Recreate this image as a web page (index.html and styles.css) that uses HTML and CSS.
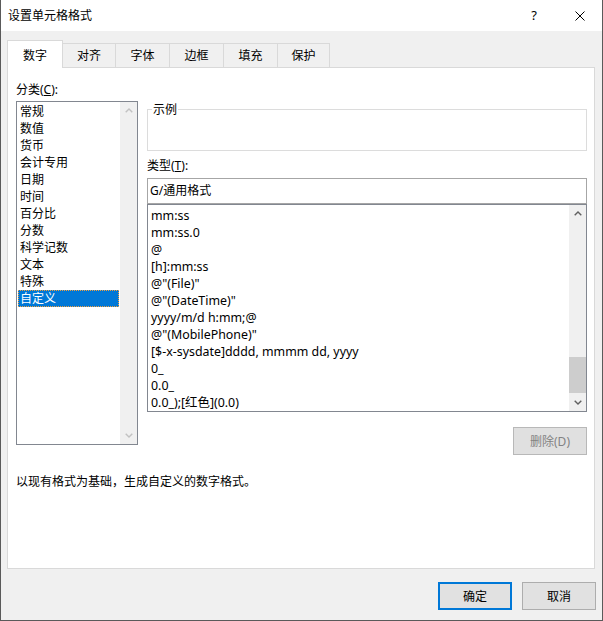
FILE: index.html
```html
<!DOCTYPE html>
<html lang="zh-CN">
<head>
<meta charset="utf-8">
<title>设置单元格格式</title>
<link rel="stylesheet" href="styles.css">
</head>
<body>
<div class="window">
  <div class="titlebar">
    <span class="title">设置单元格格式</span>
    <div class="caption-btns">
      <span class="cbtn help">?</span>
      <span class="cbtn close"><svg width="10" height="10" viewBox="0 0 10 10"><path d="M0.5 0.5 L9.5 9.5 M9.5 0.5 L0.5 9.5" stroke="#000" stroke-width="1" fill="none"/></svg></span>
    </div>
  </div>
  <div class="tabs">
    <div class="tab active">数字</div>
    <div class="tab">对齐</div>
    <div class="tab">字体</div>
    <div class="tab">边框</div>
    <div class="tab">填充</div>
    <div class="tab last">保护</div>
  </div>
  <div class="panel">
    <div class="cols">
      <div class="leftcol">
        <div class="label cat-label">分类(<u>C</u>):</div>
        <div class="catlist">
          <div class="catitems">
            <div class="item">常规</div>
            <div class="item">数值</div>
            <div class="item">货币</div>
            <div class="item">会计专用</div>
            <div class="item">日期</div>
            <div class="item">时间</div>
            <div class="item">百分比</div>
            <div class="item">分数</div>
            <div class="item">科学记数</div>
            <div class="item">文本</div>
            <div class="item">特殊</div>
            <div class="item selected">自定义</div>
          </div>
          <div class="vscroll off">
            <div class="arrow"><svg width="8" height="5" viewBox="0 0 8 5"><path d="M0.7 4.3 L4 1 L7.3 4.3" stroke="currentColor" stroke-width="1.4" fill="none"/></svg></div>
            <div class="track"></div>
            <div class="arrow"><svg width="8" height="5" viewBox="0 0 8 5"><path d="M0.7 0.7 L4 4 L7.3 0.7" stroke="currentColor" stroke-width="1.4" fill="none"/></svg></div>
          </div>
        </div>
      </div>
      <div class="rightcol">
        <div class="sample"><div class="legend">示例</div></div>
        <div class="label type-label">类型(<u>T</u>):</div>
        <div class="textbox">G/通用格式</div>
        <div class="typelist">
          <div class="typeitems">
            <div class="titem">mm:ss</div>
            <div class="titem">mm:ss.0</div>
            <div class="titem">@</div>
            <div class="titem">[h]:mm:ss</div>
            <div class="titem">@"(File)"</div>
            <div class="titem">@"(DateTime)"</div>
            <div class="titem">yyyy/m/d h:mm;@</div>
            <div class="titem">@"(MobilePhone)"</div>
            <div class="titem">[$-x-sysdate]dddd, mmmm dd, yyyy</div>
            <div class="titem">0_</div>
            <div class="titem">0.0_</div>
            <div class="titem">0.0_);[红色](0.0)</div>
          </div>
          <div class="vscroll">
            <div class="arrow"><svg width="8" height="5" viewBox="0 0 8 5"><path d="M0.7 4.3 L4 1 L7.3 4.3" stroke="currentColor" stroke-width="1.4" fill="none"/></svg></div>
            <div class="track"><div class="thumb"></div></div>
            <div class="arrow"><svg width="8" height="5" viewBox="0 0 8 5"><path d="M0.7 0.7 L4 4 L7.3 0.7" stroke="currentColor" stroke-width="1.4" fill="none"/></svg></div>
          </div>
        </div>
        <div class="btn-row">
          <button class="btn disabled">删除(D)</button>
        </div>
      </div>
    </div>
    <div class="desc">以现有格式为基础，生成自定义的数字格式。</div>
  </div>
  <div class="footer">
    <button class="btn default">确定</button>
    <button class="btn">取消</button>
  </div>
</div>
</body>
</html>
```

FILE: styles.css
```css
* { box-sizing: border-box; }

html, body {
  margin: 0;
  padding: 0;
  background: #ffffff;
}

body {
  font-family: "Noto Sans", "Noto Sans CJK SC", sans-serif;
  font-size: 12px;
  line-height: 17px;
  color: #000;
}

.window {
  width: 603px;
  height: 621px;
  background: #f0f0f0;
  border-left: 1px solid #5a5a5a;
  border-right: 1px solid #5a5a5a;
  border-bottom: 1px solid #5a5a5a;
  display: flex;
  flex-direction: column;
}

.titlebar {
  height: 31px;
  flex: none;
  background: #fff;
  display: flex;
  align-items: center;
  justify-content: space-between;
  padding-left: 7px;
}

.title {
  line-height: 31px;
}

.caption-btns {
  display: flex;
  height: 31px;
  margin-right: -1px;
}

.cbtn {
  width: 46px;
  height: 31px;
  display: flex;
  align-items: center;
  justify-content: center;
}

.help {
  font-size: 13px;
  padding-bottom: 1px;
}

.tabs {
  flex: none;
  display: flex;
  align-items: flex-end;
  margin-top: 9px;
  padding-left: 6px;
  height: 27px;
  position: relative;
  z-index: 1;
}

.tab {
  width: 55px;
  height: 24px;
  margin-left: -1px;
  border: 1px solid #d9d9d9;
  border-bottom: none;
  background: #f0f0f0;
  text-align: center;
  padding-top: 3px;
  margin-bottom: 0;
}

.tab.active {
  width: 56px;
  height: 28px;
  margin-left: 0;
  margin-bottom: -1px;
  background: #fff;
  padding-top: 6px;
}

.tab.active + .tab {
  margin-left: -1px;
  width: 54px;
}

.tab.last {
  width: 53px;
}

.panel {
  flex: none;
  height: 502px;
  margin: 0 7px 0 6px;
  background: #fff;
  border: 1px solid #d9d9d9;
  padding: 13px 7px 0 8px;
}

.cols {
  display: grid;
  grid-template-columns: 122px 440px;
  column-gap: 9px;
  align-items: start;
}

.label {
  line-height: 17px;
}

.cat-label {
  margin-bottom: 3px;
}

.catlist {
  height: 344px;
  border: 1px solid #828790;
  display: flex;
}

.catitems {
  flex: 1;
  padding: 1px;
}

.item {
  height: 17px;
  line-height: 17px;
  padding-left: 2px;
  white-space: nowrap;
}

.item.selected {
  background: #0078d7;
  color: #fff;
  outline: 1px dotted #f0a040;
  outline-offset: -1px;
}

.vscroll {
  width: 17px;
  flex: none;
  background: #f0f0f0;
  display: flex;
  flex-direction: column;
  color: #606060;
}

.vscroll.off {
  color: #c2c2c2;
}

.arrow {
  height: 17px;
  flex: none;
  display: flex;
  align-items: center;
  justify-content: center;
}

.arrow svg {
  display: block;
}

.track {
  flex: 1;
}

.thumb {
  margin-top: 135px;
  height: 36px;
  background: #cdcdcd;
}

.rightcol {
  padding-top: 28px;
  display: flex;
  flex-direction: column;
}

.sample {
  height: 42px;
  border: 1px solid #dcdcdc;
}

.legend {
  width: fit-content;
  margin-top: -9px;
  margin-left: 4px;
  padding: 0 1px;
  background: #fff;
  line-height: 17px;
}

.type-label {
  margin-top: 6px;
}

.textbox {
  margin-top: 4px;
  height: 26px;
  border: 1px solid #a6a6a6;
  padding-left: 2px;
  line-height: 24px;
}

.typelist {
  height: 208px;
  border: 1px solid #828790;
  display: flex;
}

.typeitems {
  flex: 1;
  padding: 2px 0 0 3px;
}

.titem {
  height: 17px;
  line-height: 17px;
  font-size: 12.4px;
  white-space: pre;
}

.btn-row {
  display: flex;
  justify-content: flex-end;
  margin-top: 15px;
}

.btn {
  width: 74px;
  height: 28px;
  padding: 0;
  margin: 0;
  font-family: inherit;
  font-size: 12px;
  line-height: 17px;
  background: #e1e1e1;
  border: 1px solid #adadad;
  color: #000;
  border-radius: 0;
}

.btn.disabled {
  background: #e0e0e0;
  border-color: #b8b8b8;
  color: #838383;
}

.btn.default {
  border: 2px solid #0078d7;
}

.desc {
  margin-top: 18px;
  line-height: 17px;
}

.footer {
  flex: none;
  display: flex;
  justify-content: flex-end;
  gap: 10px;
  margin-top: 13px;
  padding-right: 6px;
}
```
